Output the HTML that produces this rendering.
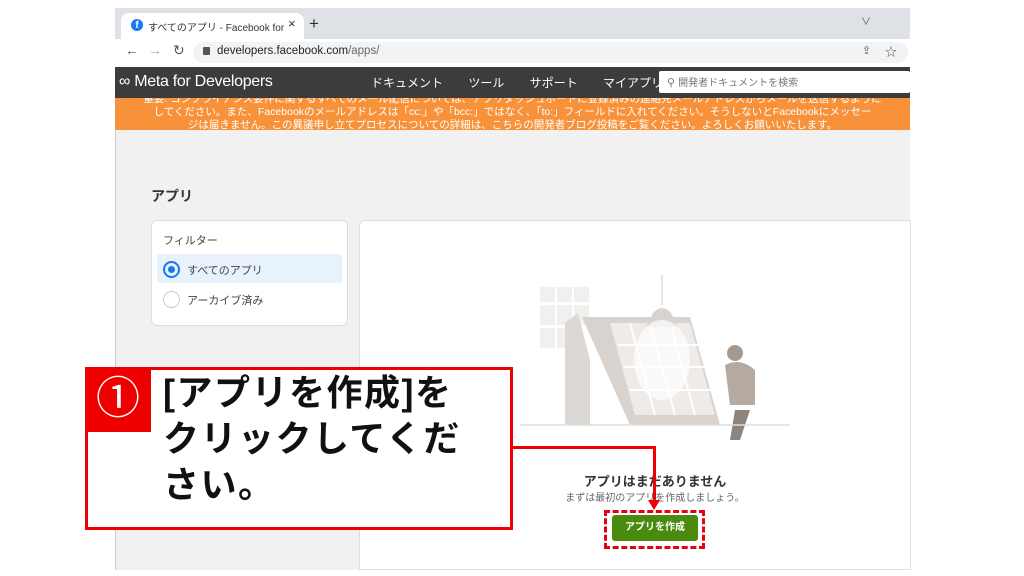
<!DOCTYPE html>
<html><head><meta charset="utf-8"><style>
*{margin:0;padding:0;box-sizing:border-box}
body{width:1024px;height:576px;background:#fff;position:relative;overflow:hidden;font-family:"Liberation Sans","Noto Sans CJK JP",sans-serif}
.a{position:absolute}
</style></head><body>
<div class="a" style="left:115px;top:8px;width:795px;height:562px;background:#f1f1f1;border-left:1px solid #ccc"></div>
<div class="a" style="left:115px;top:8px;width:795px;height:31px;background:#dee1e6"></div>
<div class="a" style="left:121px;top:13px;width:183px;height:27px;background:#fff;border-radius:8px 8px 0 0"></div>
<div class="a" style="left:131px;top:19px;width:12px;height:12px;border-radius:50%;background:#1877f2;color:#fff;font-size:10px;font-weight:bold;text-align:center;line-height:13px">f</div>
<div class="a" style="left:148px;top:19px;font-size:10px;color:#333;white-space:nowrap;width:138px;overflow:hidden">すべてのアプリ - Facebook for Deve</div>
<div class="a" style="left:288px;top:16px;font-size:13px;color:#333">×</div>
<div class="a" style="left:309px;top:14px;font-size:17px;color:#333">+</div>
<div class="a" style="left:861px;top:13px;font-size:10px;color:#555">∨</div>
<div class="a" style="left:115px;top:39px;width:795px;height:28px;background:#fff"></div>
<div class="a" style="left:125px;top:42px;font-size:14px;color:#555">←</div>
<div class="a" style="left:148px;top:42px;font-size:14px;color:#aaa">→</div>
<div class="a" style="left:173px;top:42px;font-size:14px;color:#555">↻</div>
<div class="a" style="left:193px;top:42px;width:715px;height:21px;background:#f1f3f4;border-radius:11px"></div>
<div class="a" style="left:203px;top:47px;width:7px;height:8px;background:#555;border-radius:1px"></div>
<div class="a" style="left:217px;top:45px;font-size:11.5px;color:#222">developers.facebook.com<span style="color:#666">/apps/</span></div>
<div class="a" style="left:862px;top:44px;font-size:11px;color:#555">⇪</div>
<div class="a" style="left:885px;top:43px;font-size:12px;color:#555">☆</div>
<div class="a" style="left:115px;top:67px;width:795px;height:31px;background:#3c3c3c"></div>
<div class="a" style="left:119px;top:73px;font-size:16px;color:#fff;letter-spacing:-0.3px">∞ Meta for Developers</div>
<div class="a" style="left:371px;top:74px;font-size:12px;color:#fff;word-spacing:22px;white-space:nowrap">ドキュメント ツール サポート マイアプリ</div>
<div class="a" style="left:659px;top:71px;width:251px;height:22px;background:#fff;border-radius:2px"></div>
<div class="a" style="left:667px;top:74px;font-size:11px;color:#777">⚲ <span style="font-size:10px">開発者ドキュメントを検索</span></div>
<div class="a" style="left:115px;top:98px;width:795px;height:32px;background:#f7923a;color:#fff;font-size:10.5px;line-height:13px;text-align:center;overflow:hidden;white-space:nowrap">
<div style="margin-top:-5px">重要: コンプライアンス要件に関するすべてのメール配信については、アプリダッシュボードに登録済みの連絡先メールアドレスからメールを送信するように</div>
<div>してください。また、Facebookのメールアドレスは「cc:」や「bcc:」ではなく、「to:」フィールドに入れてください。そうしないとFacebookにメッセー</div>
<div>ジは届きません。この異議申し立てプロセスについての詳細は、こちらの開発者ブログ投稿をご覧ください。よろしくお願いいたします。</div>
</div>
<div class="a" style="left:151px;top:186px;font-size:14px;color:#333;font-weight:bold">アプリ</div>
<div class="a" style="left:151px;top:220px;width:197px;height:106px;background:#fff;border:1px solid #ddd;border-radius:6px"></div>
<div class="a" style="left:163px;top:232px;font-size:11px;color:#444">フィルター</div>
<div class="a" style="left:157px;top:254px;width:185px;height:29px;background:#e7f2fd;border-radius:3px"></div>
<div class="a" style="left:163px;top:261px;width:17px;height:17px;border:2px solid #1877f2;border-radius:50%"></div>
<div class="a" style="left:168px;top:266px;width:7px;height:7px;background:#1877f2;border-radius:50%"></div>
<div class="a" style="left:187px;top:262px;font-size:11px;color:#444">すべてのアプリ</div>
<div class="a" style="left:163px;top:291px;width:17px;height:17px;border:1px solid #ccc;border-radius:50%"></div>
<div class="a" style="left:187px;top:292px;font-size:11px;color:#444">アーカイブ済み</div>
<div class="a" style="left:359px;top:220px;width:552px;height:350px;background:#fff;border:1px solid #ddd;border-radius:6px 0 0 0"></div>
<svg class="a" style="left:520px;top:275px" width="280" height="170">
<g fill="#f0f0ef"><rect x="20" y="12" width="15" height="15"/><rect x="37" y="12" width="15" height="15"/><rect x="54" y="12" width="15" height="15"/><rect x="20" y="30" width="15" height="20"/><rect x="37" y="30" width="15" height="20"/><rect x="54" y="30" width="15" height="20"/><rect x="20" y="53" width="15" height="20"/><rect x="37" y="53" width="15" height="20"/></g>
<polygon points="45,48 58,38 70,85 70,150 45,150" fill="#dcd8d4"/>
<polygon points="62,42 170,42 200,150 110,150" fill="#d8d3ce"/>
<polygon points="90,48 170,48 195,140 115,140" fill="#eeebe8"/>
<g stroke="#fff" stroke-width="2"><line x1="98" y1="70" x2="182" y2="70"/><line x1="104" y1="92" x2="188" y2="92"/><line x1="110" y1="115" x2="193" y2="115"/><line x1="110" y1="48" x2="135" y2="140"/><line x1="130" y1="48" x2="155" y2="140"/><line x1="150" y1="48" x2="175" y2="140"/></g>
<line x1="142" y1="0" x2="142" y2="30" stroke="#ccc"/>
<path d="M133 38 Q142 28 151 38 L158 52 L126 52Z" fill="#d8d3ce"/>
<ellipse cx="142" cy="85" rx="28" ry="40" fill="#fff" opacity="0.7"/>
<circle cx="215" cy="78" r="8" fill="#a69a90"/>
<path d="M205 90 Q220 82 235 95 L235 130 L210 130Z" fill="#b4aaa2"/>
<path d="M215 135 L230 135 L220 165 L210 165Z" fill="#8e847d"/>
<line x1="0" y1="150" x2="270" y2="150" stroke="#ddd" stroke-width="1.5"/>
</svg>
<div class="a" style="left:360px;top:471px;width:590px;text-align:center;font-size:13px;color:#333;font-weight:bold">アプリはまだありません</div>
<div class="a" style="left:360px;top:489px;width:590px;text-align:center;font-size:10px;color:#666">まずは最初のアプリを作成しましょう。</div>
<div class="a" style="left:612px;top:515px;width:86px;height:26px;background:#4a8a0e;border-radius:3px;color:#fff;font-size:10px;font-weight:bold;text-align:center;line-height:26px">アプリを作成</div>
<div class="a" style="left:604px;top:510px;width:101px;height:39px;border:3px dashed #e60012"></div>
<div class="a" style="left:85px;top:367px;width:428px;height:163px;border:3px solid #ee0000;background:#fff"></div>
<div class="a" style="left:85px;top:367px;width:66px;height:65px;background:#ee0000;color:#fff;font-size:44px;text-align:center;line-height:64px">①</div>
<div class="a" style="left:163px;top:370px;font-size:36px;font-weight:bold;color:#111;line-height:46px;letter-spacing:1.5px">[アプリを作成]を<br>クリックしてくだ<br>さい。</div>
<div class="a" style="left:513px;top:446px;width:143px;height:3px;background:#ee0000"></div>
<div class="a" style="left:653px;top:446px;width:3px;height:56px;background:#ee0000"></div>
<div class="a" style="left:648px;top:500px;width:0;height:0;border-left:6px solid transparent;border-right:6px solid transparent;border-top:10px solid #ee0000"></div>
</body></html>
